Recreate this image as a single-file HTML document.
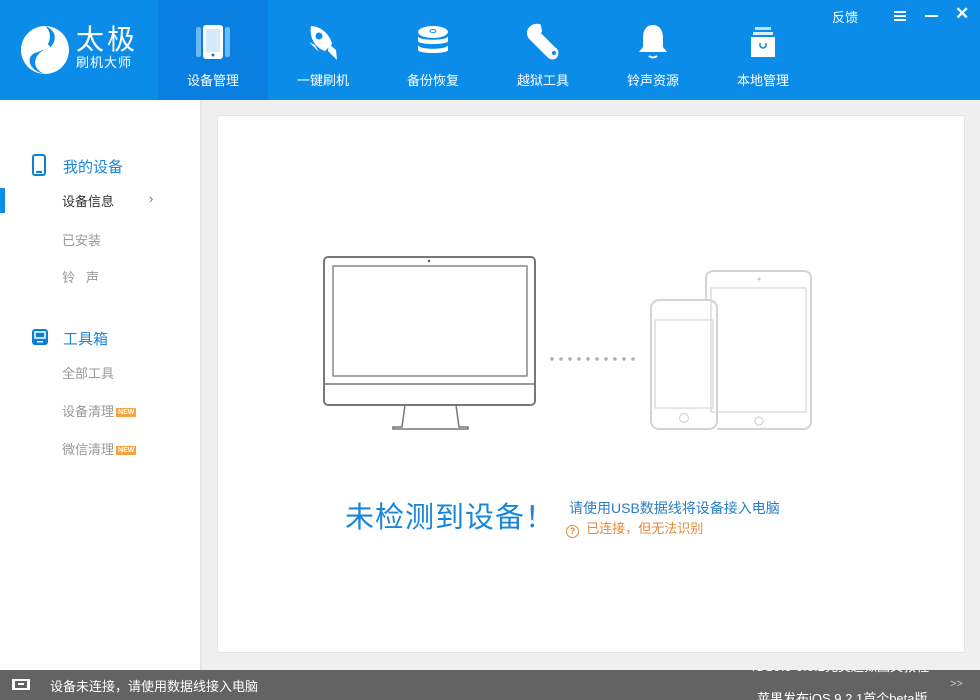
<!DOCTYPE html>
<html style="overflow:hidden"><head><meta charset="utf-8"><style>
*{margin:0;padding:0;box-sizing:border-box}
html,body{width:980px;height:700px;overflow:hidden}
body{background:#efefef;font-family:"Liberation Sans","Noto Sans CJK SC",sans-serif;position:relative}
.hd{position:absolute;left:0;top:0;width:980px;height:100px;background:#0c8ce9}
.tab{position:absolute;top:0;width:110px;height:100px;color:#fff;font-size:13px;text-align:center}
.tab .lb{position:absolute;top:70px;left:0;width:100%}
.tab svg{position:absolute;left:35px;top:22px}
.act{background:#0a7fe2}
.side{position:absolute;left:0;top:100px;width:200px;height:570px;background:#fff}
.side div{position:absolute;font-size:13px;color:#999}
.new{display:inline-block;background:#f4a340;color:#fff;font-size:7px;font-weight:bold;padding:0 2px;line-height:9px;vertical-align:2px;margin-left:2px}
.panel{position:absolute;left:217px;top:115px;width:748px;height:538px;background:#fff;border:1px solid #e4e4e4}
.sb{position:absolute;left:0;top:670px;width:980px;height:30px;background:#636363;color:#fff;font-size:13px;overflow:hidden}
</style></head><body>
<div class="hd">
 <svg style="position:absolute;left:20px;top:25px" width="50" height="50" viewBox="0 0 50 50"><circle cx="25" cy="25" r="24" fill="#fff"/><path d="M25 1C40 6 36 22 25 25C14 28 10 44 25 49C8 46 4 30 18 27C30 24 34 8 25 1Z" fill="#0c8ce9"/><circle cx="26" cy="23" r="4" fill="#fff"/></svg>
 <div style="position:absolute;left:76px;top:25px;color:#fff;font-size:28px;line-height:30px;letter-spacing:3px">太极</div>
 <div style="position:absolute;left:76px;top:55px;color:#fff;font-size:13px;line-height:15px;letter-spacing:1px">刷机大师</div>
 <div class="tab act" style="left:158px"><svg width="40" height="40" viewBox="0 0 40 40"><rect x="3" y="5" width="5" height="30" rx="2" fill="#6cbaf5"/><rect x="32" y="5" width="5" height="30" rx="2" fill="#6cbaf5"/><rect x="10" y="3" width="20" height="34" rx="3" fill="#fff"/><rect x="13" y="7" width="14" height="23" fill="#d5ebfc"/><circle cx="20" cy="33" r="1.5" fill="#0a7fe2"/></svg><div class="lb">设备管理</div></div>
 <div class="tab" style="left:268px"><svg width="40" height="40" viewBox="0 0 40 40"><path d="M8 4C17 4 27 12 29 22L22 29C12 26 6 15 8 4Z" fill="#fff"/><circle cx="16" cy="14" r="3.5" fill="#0c8ce9"/><path d="M26 22L33 28L34 38L25 29Z M6 20L12 23L16 30Z" fill="#fff"/></svg><div class="lb">一键刷机</div></div>
 <div class="tab" style="left:378px"><svg width="40" height="40" viewBox="0 0 40 40"><ellipse cx="20" cy="10" rx="15" ry="6" fill="#fff"/><path d="M5 14v5c0 4 30 4 30 0v-5c0 5-30 5-30 0Z M5 23v5c0 4 30 4 30 0v-5c0 5-30 5-30 0Z" fill="#fff"/><ellipse cx="20" cy="9" rx="3" ry="1.5" fill="none" stroke="#0c8ce9"/></svg><div class="lb">备份恢复</div></div>
 <div class="tab" style="left:488px"><svg width="40" height="40" viewBox="0 0 40 40"><path d="M8 6l5 5 4-2-1-5c-5-1-10 2-10 7 0 2 1 4 2 5l18 18c2 2 6 2 7-1s0-5-2-6L16 12" fill="#fff" stroke="#fff" stroke-width="4" stroke-linejoin="round"/><circle cx="31" cy="31" r="2" fill="#0c8ce9"/></svg><div class="lb">越狱工具</div></div>
 <div class="tab" style="left:598px"><svg width="40" height="40" viewBox="0 0 40 40"><path d="M20 3c7 0 10 6 10 13v9l4 5H6l4-5v-9c0-7 3-13 10-13Z" fill="#fff"/><path d="M16 34q4 3 8 0" stroke="#fff" stroke-width="2" fill="none"/></svg><div class="lb">铃声资源</div></div>
 <div class="tab" style="left:708px"><svg width="40" height="40" viewBox="0 0 40 40"><rect x="12" y="5" width="16" height="3" fill="#bfe0fb"/><rect x="10" y="10" width="20" height="3" fill="#d9edfd"/><rect x="8" y="15" width="24" height="20" fill="#fff"/><path d="M17 21v3q3 4 6 0v-3" stroke="#0c8ce9" stroke-width="1.5" fill="none"/></svg><div class="lb">本地管理</div></div>
 <div style="position:absolute;left:832px;top:7px;color:#fff;font-size:13px">反馈</div>
 <div style="position:absolute;left:894px;top:11px;width:12px;height:2px;background:#fff;box-shadow:0 4px #fff,0 8px #fff"></div>
 <div style="position:absolute;left:925px;top:15px;width:13px;height:2px;background:#fff"></div>
 <div style="position:absolute;left:955px;top:4px;color:#fff;font-size:17px;font-weight:bold">✕</div>
</div>
<div class="side">
 <svg style="position:absolute;left:32px;top:54px" width="14" height="22" viewBox="0 0 14 22"><rect x="1" y="1" width="12" height="20" rx="2" fill="none" stroke="#0c7fd6" stroke-width="2"/><rect x="4" y="17" width="6" height="2" fill="#0c7fd6"/></svg>
 <div style="left:63px;top:56px;font-size:15px;color:#1a86d8">我的设备</div>
 <div style="left:0;top:88px;width:5px;height:25px;background:#0c8ce9"></div>
 <div style="left:62px;top:91px;color:#333">设备信息</div>
 <div style="left:149px;top:91px;color:#777">›</div>
 <div style="left:62px;top:130px">已安装</div>
 <div style="left:62px;top:167px">铃&nbsp;&nbsp;&nbsp;声</div>
 <svg style="position:absolute;left:32px;top:229px" width="16" height="16" viewBox="0 0 16 16"><rect x="0" y="0" width="16" height="16" rx="3" fill="#0c7fd6"/><rect x="3" y="3" width="10" height="6" fill="none" stroke="#fff" stroke-width="1.5"/><rect x="5" y="12" width="6" height="1.5" fill="#fff"/></svg>
 <div style="left:63px;top:228px;font-size:15px;color:#1a86d8">工具箱</div>
 <div style="left:62px;top:263px">全部工具</div>
 <div style="left:62px;top:301px">设备清理<span class="new">NEW</span></div>
 <div style="left:62px;top:339px">微信清理<span class="new">NEW</span></div>
</div>
<div class="panel">
<svg style="position:absolute;left:-217px;top:-115px" width="980" height="700">
 <g fill="none" stroke="#777" stroke-width="2">
  <rect x="323" y="256" width="211" height="148" rx="4"/>
  <rect x="332" y="265" width="194" height="110" stroke-width="1.3"/>
  <line x1="323" y1="383" x2="534" y2="383" stroke-width="1.5"/>
  <path d="M404 404L401 426H392v2H467v-2H458L455 404" stroke-width="1.5"/>
 </g>
 <circle cx="428" cy="260" r="1.2" fill="#555"/>
 <g fill="#aaa"><circle cx="551" cy="358" r="1.7"/><circle cx="560" cy="358" r="1.7"/><circle cx="569" cy="358" r="1.7"/><circle cx="578" cy="358" r="1.7"/><circle cx="587" cy="358" r="1.7"/><circle cx="596" cy="358" r="1.7"/><circle cx="605" cy="358" r="1.7"/><circle cx="614" cy="358" r="1.7"/><circle cx="623" cy="358" r="1.7"/><circle cx="632" cy="358" r="1.7"/></g>
 <g fill="none" stroke="#d4d4d4" stroke-width="2">
  <path d="M705 299V277a7 7 0 0 1 7-7h91a7 7 0 0 1 7 7v144a7 7 0 0 1-7 7H716"/>
  <rect x="710" y="287" width="95" height="124" stroke-width="1.2"/>
  <circle cx="758" cy="420" r="4" stroke-width="1.3"/>
  <rect x="650" y="299" width="66" height="129" rx="8"/>
  <rect x="654" y="319" width="58" height="88" stroke-width="1.2"/>
  <circle cx="683" cy="417" r="4.5" stroke-width="1.3"/>
 </g>
 <circle cx="758" cy="278" r="1.5" fill="#ccc"/>
</svg>
 <div style="position:absolute;left:127px;top:378px;font-size:29px;color:#1a86d8;letter-spacing:1px">未检测到设备！</div>
 <div style="position:absolute;left:351px;top:382px;font-size:14px;color:#2a7ec4">请使用USB数据线将设备接入电脑</div>
 <div style="position:absolute;left:348px;top:402px;font-size:13px;color:#e08a3a"><span style="display:inline-block;width:13px;height:13px;border:1.5px solid #e08a3a;border-radius:50%;font-size:9px;line-height:10px;text-align:center;vertical-align:-1px;font-weight:bold">?</span>&nbsp; 已连接，但无法识别</div>
</div>
<div style="position:absolute;left:200px;top:100px;width:2px;height:570px;background:#e6e6e6"></div>
<div class="sb">
 <div style="position:absolute;left:12px;top:9px;width:18px;height:11px;border:2px solid #fff;border-left-width:3px;border-right-width:3px"><div style="position:absolute;left:3px;top:2px;width:6px;height:2px;background:#fff"></div></div>
 <div style="position:absolute;left:50px;top:6px">设备未连接，请使用数据线接入电脑</div>
 <div style="position:absolute;left:752px;top:-12px;font-size:13px;line-height:18px">iOS9.0-9.0.2完美越狱图文教程</div>
 <div style="position:absolute;left:757px;top:20px;font-size:13px;line-height:18px">苹果发布iOS 9.2.1首个beta版</div>
 <div style="position:absolute;left:950px;top:8px;font-size:11px;color:#ccc">&gt;&gt;</div>
</div>
</body></html>
